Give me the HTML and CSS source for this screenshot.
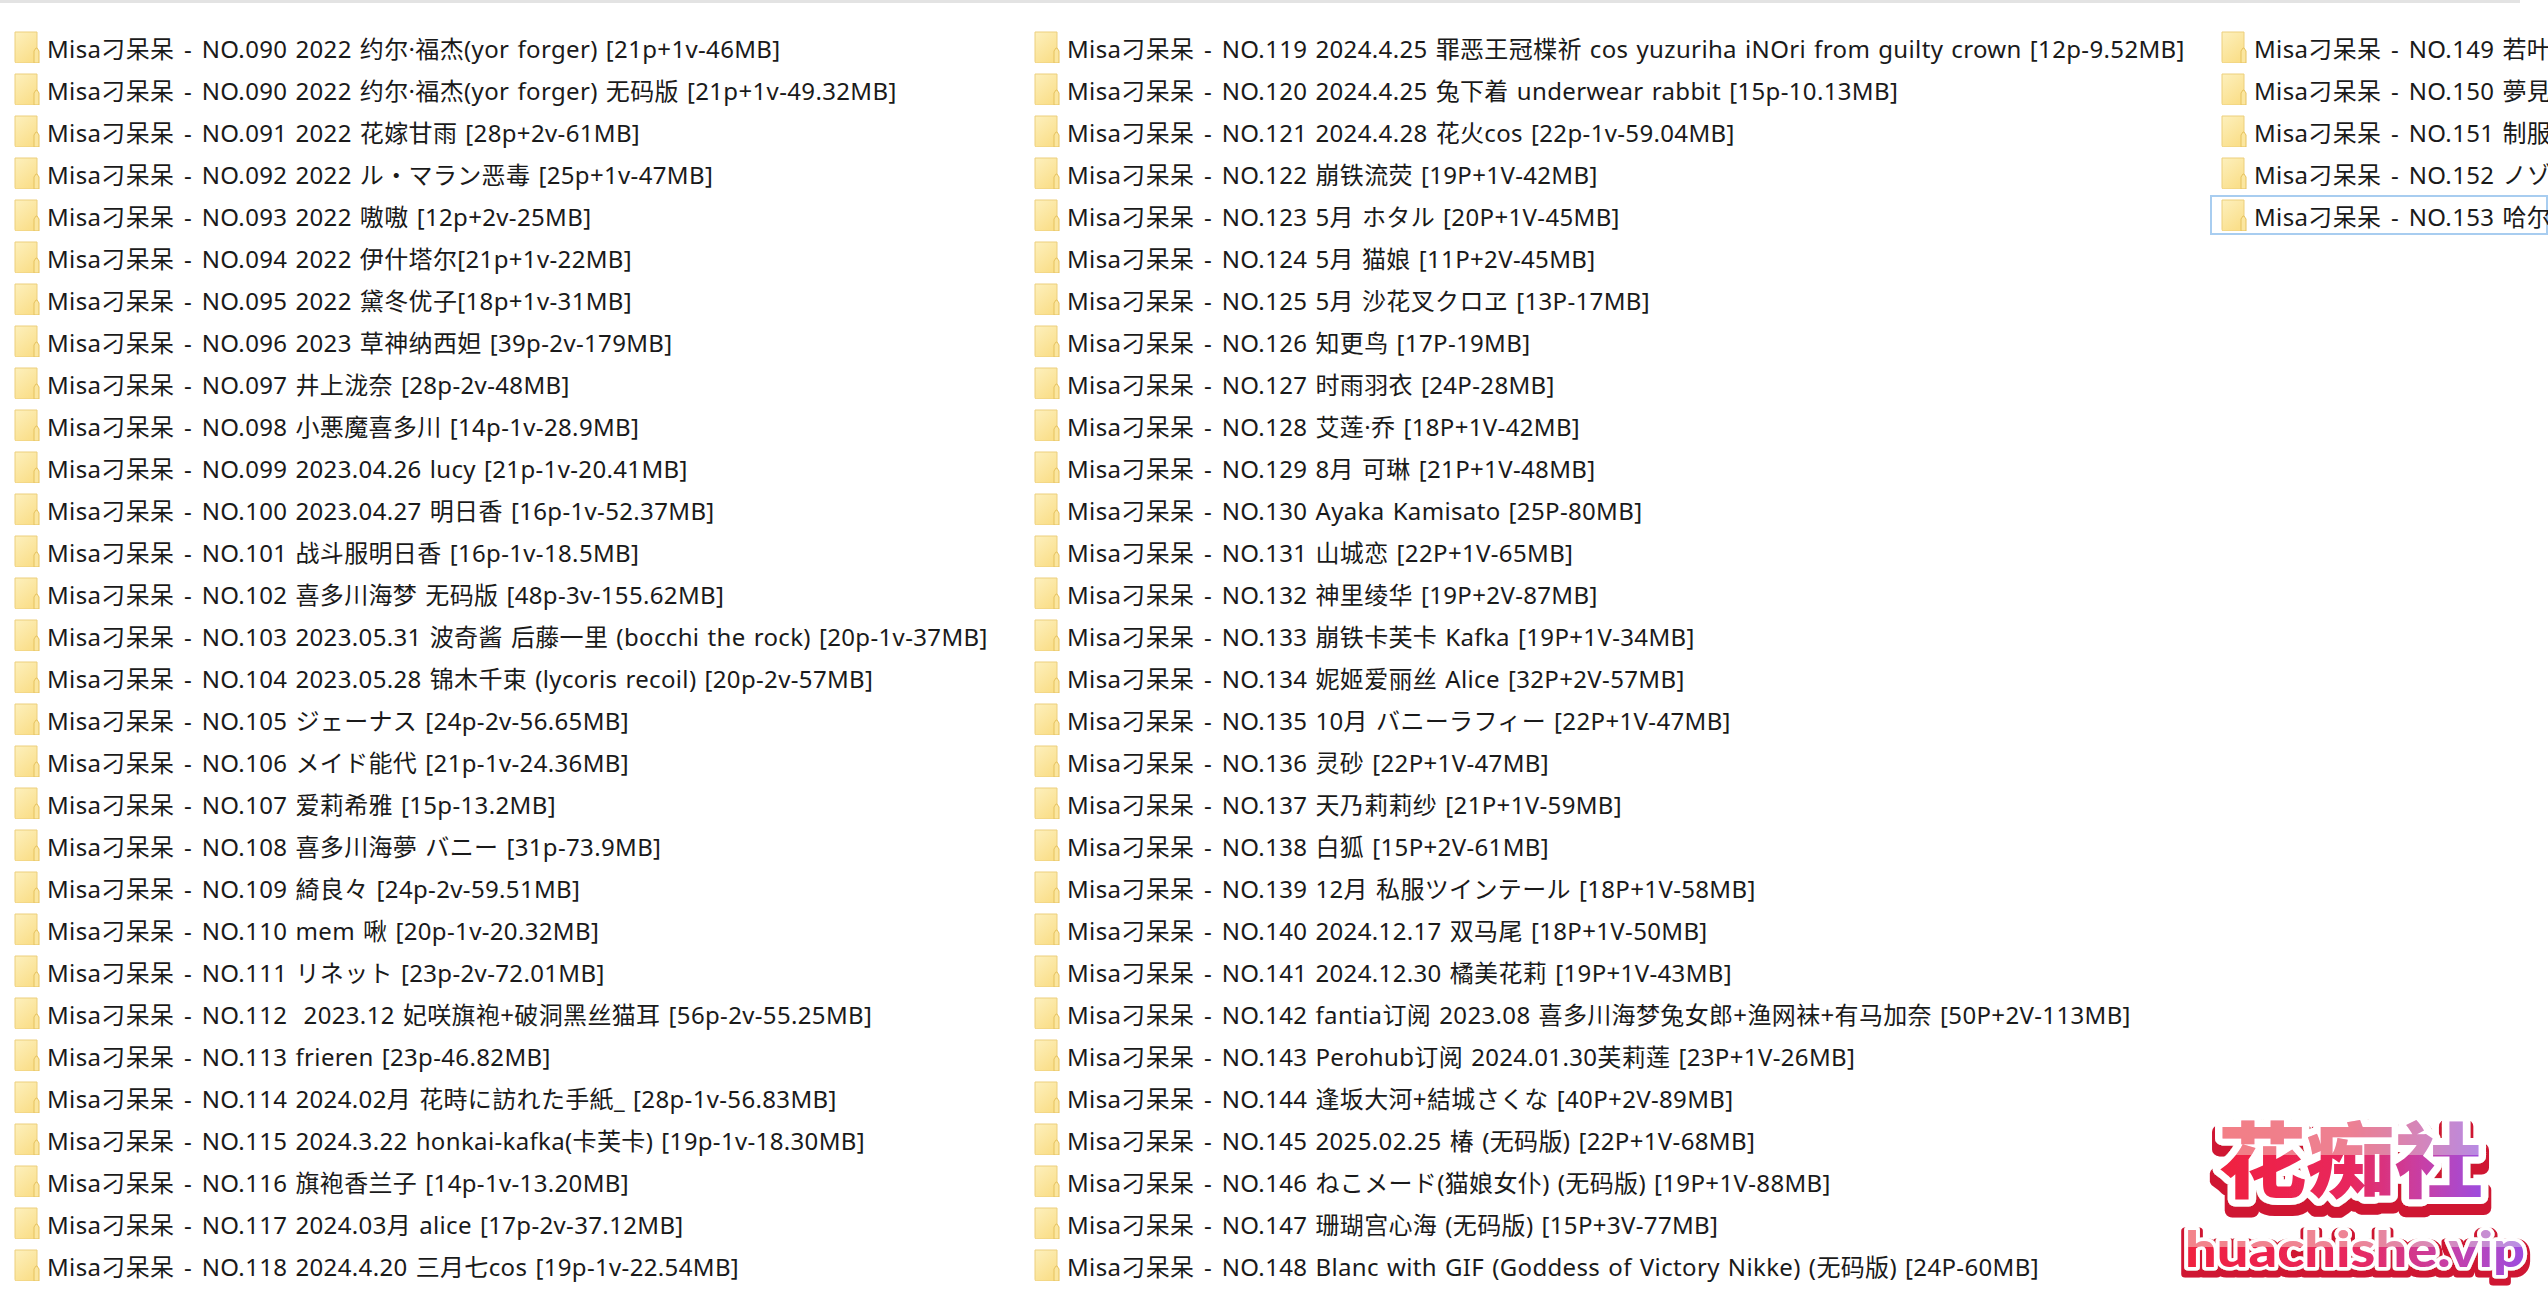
FILE: index.html

```html
<!DOCTYPE html>
<html lang="zh-CN">
<head>
  <meta charset="UTF-8" />
  <title>Misa刁呆呆</title>
  <link rel="stylesheet" href="styles.css">
</head>
<body>
  <svg class="defs" width="0" height="0">
    <defs>
      <linearGradient id="folderFill" x1="0" y1="0" x2="0.6" y2="1">
        <stop offset="0" stop-color="#fdf0bd"/>
        <stop offset="1" stop-color="#fadf8b"/>
      </linearGradient>
      <symbol id="folder" viewBox="0 0 26 32">
        <path d="M1 1h22v31H2.5Q1 32 1 30.5z" fill="url(#folderFill)" stroke="#eccf7c" stroke-width="1"/>
        <path d="M20 32V20l2-3 1 0 2 3v12z" fill="#fbe69f" stroke="#e6c25f" stroke-width="1"/>
      </symbol>
    </defs>
  </svg>

  <div class="topline"></div>

  <main class="listing">
    <ul class="col col-a">
      <li class="item"><svg class="ico"><use href="#folder"/></svg><span class="name">Misa刁呆呆 <span class="dash">-</span> NO.090 2022 约尔·福杰(yor forger) [21p+1v-46MB]</span></li>
      <li class="item"><svg class="ico"><use href="#folder"/></svg><span class="name">Misa刁呆呆 <span class="dash">-</span> NO.090 2022 约尔·福杰(yor forger) 无码版 [21p+1v-49.32MB]</span></li>
      <li class="item"><svg class="ico"><use href="#folder"/></svg><span class="name">Misa刁呆呆 <span class="dash">-</span> NO.091 2022 花嫁甘雨 [28p+2v-61MB]</span></li>
      <li class="item"><svg class="ico"><use href="#folder"/></svg><span class="name">Misa刁呆呆 <span class="dash">-</span> NO.092 2022 ル・マラン恶毒 [25p+1v-47MB]</span></li>
      <li class="item"><svg class="ico"><use href="#folder"/></svg><span class="name">Misa刁呆呆 <span class="dash">-</span> NO.093 2022 嗷嗷 [12p+2v-25MB]</span></li>
      <li class="item"><svg class="ico"><use href="#folder"/></svg><span class="name">Misa刁呆呆 <span class="dash">-</span> NO.094 2022 伊什塔尔[21p+1v-22MB]</span></li>
      <li class="item"><svg class="ico"><use href="#folder"/></svg><span class="name">Misa刁呆呆 <span class="dash">-</span> NO.095 2022 黛冬优子[18p+1v-31MB]</span></li>
      <li class="item"><svg class="ico"><use href="#folder"/></svg><span class="name">Misa刁呆呆 <span class="dash">-</span> NO.096 2023 草神纳西妲 [39p-2v-179MB]</span></li>
      <li class="item"><svg class="ico"><use href="#folder"/></svg><span class="name">Misa刁呆呆 <span class="dash">-</span> NO.097 井上泷奈 [28p-2v-48MB]</span></li>
      <li class="item"><svg class="ico"><use href="#folder"/></svg><span class="name">Misa刁呆呆 <span class="dash">-</span> NO.098 小悪魔喜多川 [14p-1v-28.9MB]</span></li>
      <li class="item"><svg class="ico"><use href="#folder"/></svg><span class="name">Misa刁呆呆 <span class="dash">-</span> NO.099 2023.04.26 lucy [21p-1v-20.41MB]</span></li>
      <li class="item"><svg class="ico"><use href="#folder"/></svg><span class="name">Misa刁呆呆 <span class="dash">-</span> NO.100 2023.04.27 明日香 [16p-1v-52.37MB]</span></li>
      <li class="item"><svg class="ico"><use href="#folder"/></svg><span class="name">Misa刁呆呆 <span class="dash">-</span> NO.101 战斗服明日香 [16p-1v-18.5MB]</span></li>
      <li class="item"><svg class="ico"><use href="#folder"/></svg><span class="name">Misa刁呆呆 <span class="dash">-</span> NO.102 喜多川海梦 无码版 [48p-3v-155.62MB]</span></li>
      <li class="item"><svg class="ico"><use href="#folder"/></svg><span class="name">Misa刁呆呆 <span class="dash">-</span> NO.103 2023.05.31 波奇酱 后藤一里 (bocchi the rock) [20p-1v-37MB]</span></li>
      <li class="item"><svg class="ico"><use href="#folder"/></svg><span class="name">Misa刁呆呆 <span class="dash">-</span> NO.104 2023.05.28 锦木千束 (lycoris recoil) [20p-2v-57MB]</span></li>
      <li class="item"><svg class="ico"><use href="#folder"/></svg><span class="name">Misa刁呆呆 <span class="dash">-</span> NO.105 ジェーナス [24p-2v-56.65MB]</span></li>
      <li class="item"><svg class="ico"><use href="#folder"/></svg><span class="name">Misa刁呆呆 <span class="dash">-</span> NO.106 メイド能代 [21p-1v-24.36MB]</span></li>
      <li class="item"><svg class="ico"><use href="#folder"/></svg><span class="name">Misa刁呆呆 <span class="dash">-</span> NO.107 爱莉希雅 [15p-13.2MB]</span></li>
      <li class="item"><svg class="ico"><use href="#folder"/></svg><span class="name">Misa刁呆呆 <span class="dash">-</span> NO.108 喜多川海夢 バニー [31p-73.9MB]</span></li>
      <li class="item"><svg class="ico"><use href="#folder"/></svg><span class="name">Misa刁呆呆 <span class="dash">-</span> NO.109 綺良々 [24p-2v-59.51MB]</span></li>
      <li class="item"><svg class="ico"><use href="#folder"/></svg><span class="name">Misa刁呆呆 <span class="dash">-</span> NO.110 mem 啾 [20p-1v-20.32MB]</span></li>
      <li class="item"><svg class="ico"><use href="#folder"/></svg><span class="name">Misa刁呆呆 <span class="dash">-</span> NO.111 リネット [23p-2v-72.01MB]</span></li>
      <li class="item"><svg class="ico"><use href="#folder"/></svg><span class="name">Misa刁呆呆 <span class="dash">-</span> NO.112 &nbsp;2023.12 妃咲旗袍+破洞黑丝猫耳 [56p-2v-55.25MB]</span></li>
      <li class="item"><svg class="ico"><use href="#folder"/></svg><span class="name">Misa刁呆呆 <span class="dash">-</span> NO.113 frieren [23p-46.82MB]</span></li>
      <li class="item"><svg class="ico"><use href="#folder"/></svg><span class="name">Misa刁呆呆 <span class="dash">-</span> NO.114 2024.02月 花時に訪れた手紙_ [28p-1v-56.83MB]</span></li>
      <li class="item"><svg class="ico"><use href="#folder"/></svg><span class="name">Misa刁呆呆 <span class="dash">-</span> NO.115 2024.3.22 honkai-kafka(卡芙卡) [19p-1v-18.30MB]</span></li>
      <li class="item"><svg class="ico"><use href="#folder"/></svg><span class="name">Misa刁呆呆 <span class="dash">-</span> NO.116 旗袍香兰子 [14p-1v-13.20MB]</span></li>
      <li class="item"><svg class="ico"><use href="#folder"/></svg><span class="name">Misa刁呆呆 <span class="dash">-</span> NO.117 2024.03月 alice [17p-2v-37.12MB]</span></li>
      <li class="item"><svg class="ico"><use href="#folder"/></svg><span class="name">Misa刁呆呆 <span class="dash">-</span> NO.118 2024.4.20 三月七cos [19p-1v-22.54MB]</span></li>
    </ul>

    <ul class="col col-b">
      <li class="item"><svg class="ico"><use href="#folder"/></svg><span class="name">Misa刁呆呆 <span class="dash">-</span> NO.119 2024.4.25 罪恶王冠楪祈 cos yuzuriha iNOri from guilty crown [12p-9.52MB]</span></li>
      <li class="item"><svg class="ico"><use href="#folder"/></svg><span class="name">Misa刁呆呆 <span class="dash">-</span> NO.120 2024.4.25 兔下着 underwear rabbit [15p-10.13MB]</span></li>
      <li class="item"><svg class="ico"><use href="#folder"/></svg><span class="name">Misa刁呆呆 <span class="dash">-</span> NO.121 2024.4.28 花火cos [22p-1v-59.04MB]</span></li>
      <li class="item"><svg class="ico"><use href="#folder"/></svg><span class="name">Misa刁呆呆 <span class="dash">-</span> NO.122 崩铁流荧 [19P+1V-42MB]</span></li>
      <li class="item"><svg class="ico"><use href="#folder"/></svg><span class="name">Misa刁呆呆 <span class="dash">-</span> NO.123 5月 ホタル [20P+1V-45MB]</span></li>
      <li class="item"><svg class="ico"><use href="#folder"/></svg><span class="name">Misa刁呆呆 <span class="dash">-</span> NO.124 5月 猫娘 [11P+2V-45MB]</span></li>
      <li class="item"><svg class="ico"><use href="#folder"/></svg><span class="name">Misa刁呆呆 <span class="dash">-</span> NO.125 5月 沙花叉クロヱ [13P-17MB]</span></li>
      <li class="item"><svg class="ico"><use href="#folder"/></svg><span class="name">Misa刁呆呆 <span class="dash">-</span> NO.126 知更鸟 [17P-19MB]</span></li>
      <li class="item"><svg class="ico"><use href="#folder"/></svg><span class="name">Misa刁呆呆 <span class="dash">-</span> NO.127 时雨羽衣 [24P-28MB]</span></li>
      <li class="item"><svg class="ico"><use href="#folder"/></svg><span class="name">Misa刁呆呆 <span class="dash">-</span> NO.128 艾莲·乔 [18P+1V-42MB]</span></li>
      <li class="item"><svg class="ico"><use href="#folder"/></svg><span class="name">Misa刁呆呆 <span class="dash">-</span> NO.129 8月 可琳 [21P+1V-48MB]</span></li>
      <li class="item"><svg class="ico"><use href="#folder"/></svg><span class="name">Misa刁呆呆 <span class="dash">-</span> NO.130 Ayaka Kamisato [25P-80MB]</span></li>
      <li class="item"><svg class="ico"><use href="#folder"/></svg><span class="name">Misa刁呆呆 <span class="dash">-</span> NO.131 山城恋 [22P+1V-65MB]</span></li>
      <li class="item"><svg class="ico"><use href="#folder"/></svg><span class="name">Misa刁呆呆 <span class="dash">-</span> NO.132 神里绫华 [19P+2V-87MB]</span></li>
      <li class="item"><svg class="ico"><use href="#folder"/></svg><span class="name">Misa刁呆呆 <span class="dash">-</span> NO.133 崩铁卡芙卡 Kafka [19P+1V-34MB]</span></li>
      <li class="item"><svg class="ico"><use href="#folder"/></svg><span class="name">Misa刁呆呆 <span class="dash">-</span> NO.134 妮姬爱丽丝 Alice [32P+2V-57MB]</span></li>
      <li class="item"><svg class="ico"><use href="#folder"/></svg><span class="name">Misa刁呆呆 <span class="dash">-</span> NO.135 10月 バニーラフィー [22P+1V-47MB]</span></li>
      <li class="item"><svg class="ico"><use href="#folder"/></svg><span class="name">Misa刁呆呆 <span class="dash">-</span> NO.136 灵砂 [22P+1V-47MB]</span></li>
      <li class="item"><svg class="ico"><use href="#folder"/></svg><span class="name">Misa刁呆呆 <span class="dash">-</span> NO.137 天乃莉莉纱 [21P+1V-59MB]</span></li>
      <li class="item"><svg class="ico"><use href="#folder"/></svg><span class="name">Misa刁呆呆 <span class="dash">-</span> NO.138 白狐 [15P+2V-61MB]</span></li>
      <li class="item"><svg class="ico"><use href="#folder"/></svg><span class="name">Misa刁呆呆 <span class="dash">-</span> NO.139 12月 私服ツインテール [18P+1V-58MB]</span></li>
      <li class="item"><svg class="ico"><use href="#folder"/></svg><span class="name">Misa刁呆呆 <span class="dash">-</span> NO.140 2024.12.17 双马尾 [18P+1V-50MB]</span></li>
      <li class="item"><svg class="ico"><use href="#folder"/></svg><span class="name">Misa刁呆呆 <span class="dash">-</span> NO.141 2024.12.30 橘美花莉 [19P+1V-43MB]</span></li>
      <li class="item"><svg class="ico"><use href="#folder"/></svg><span class="name">Misa刁呆呆 <span class="dash">-</span> NO.142 fantia订阅 2023.08 喜多川海梦兔女郎+渔网袜+有马加奈 [50P+2V-113MB]</span></li>
      <li class="item"><svg class="ico"><use href="#folder"/></svg><span class="name">Misa刁呆呆 <span class="dash">-</span> NO.143 Perohub订阅 2024.01.30芙莉莲 [23P+1V-26MB]</span></li>
      <li class="item"><svg class="ico"><use href="#folder"/></svg><span class="name">Misa刁呆呆 <span class="dash">-</span> NO.144 逢坂大河+結城さくな [40P+2V-89MB]</span></li>
      <li class="item"><svg class="ico"><use href="#folder"/></svg><span class="name">Misa刁呆呆 <span class="dash">-</span> NO.145 2025.02.25 椿 (无码版) [22P+1V-68MB]</span></li>
      <li class="item"><svg class="ico"><use href="#folder"/></svg><span class="name">Misa刁呆呆 <span class="dash">-</span> NO.146 ねこメード(猫娘女仆) (无码版) [19P+1V-88MB]</span></li>
      <li class="item"><svg class="ico"><use href="#folder"/></svg><span class="name">Misa刁呆呆 <span class="dash">-</span> NO.147 珊瑚宫心海 (无码版) [15P+3V-77MB]</span></li>
      <li class="item"><svg class="ico"><use href="#folder"/></svg><span class="name">Misa刁呆呆 <span class="dash">-</span> NO.148 Blanc with GIF (Goddess of Victory Nikke) (无码版) [24P-60MB]</span></li>
    </ul>

    <ul class="col col-c">
      <li class="item"><svg class="ico"><use href="#folder"/></svg><span class="name">Misa刁呆呆 <span class="dash">-</span> NO.149 若叶</span></li>
      <li class="item"><svg class="ico"><use href="#folder"/></svg><span class="name">Misa刁呆呆 <span class="dash">-</span> NO.150 夢見</span></li>
      <li class="item"><svg class="ico"><use href="#folder"/></svg><span class="name">Misa刁呆呆 <span class="dash">-</span> NO.151 制服</span></li>
      <li class="item"><svg class="ico"><use href="#folder"/></svg><span class="name">Misa刁呆呆 <span class="dash">-</span> NO.152 ノゾ</span></li>
      <li class="item selected"><svg class="ico"><use href="#folder"/></svg><span class="name">Misa刁呆呆 <span class="dash">-</span> NO.153 哈尔</span></li>
    </ul>
  </main>

  <svg class="logo" width="370" height="190" viewBox="0 0 370 190">
    <defs>
      <linearGradient id="logoGrad" x1="0" y1="0" x2="1" y2="0">
        <stop offset="0" stop-color="#f0203f"/>
        <stop offset="0.5" stop-color="#e8285e"/>
        <stop offset="0.78" stop-color="#c640a8"/>
        <stop offset="1" stop-color="#9c4de0"/>
      </linearGradient>
      <filter id="edgeZh" filterUnits="userSpaceOnUse" x="0" y="0" width="370" height="190">
        <feMorphology in="SourceAlpha" operator="dilate" radius="3" result="fat"/>
        <feOffset in="fat" dy="8" result="low"/>
        <feFlood flood-color="#cf1433"/>
        <feComposite in2="low" operator="in" result="red"/>
        <feFlood flood-color="#fff" flood-opacity="0.2" x="0" y="0" width="370" height="50"/>
        <feComposite in2="SourceAlpha" operator="in" result="gloss"/>
        <feMerge>
          <feMergeNode in="red"/>
          <feMergeNode in="SourceGraphic"/>
          <feMergeNode in="gloss"/>
        </feMerge>
      </filter>
      <filter id="edgeEn" filterUnits="userSpaceOnUse" x="0" y="0" width="370" height="190">
        <feMorphology in="SourceAlpha" operator="dilate" radius="3" result="fat"/>
        <feOffset in="fat" dy="4" result="low"/>
        <feFlood flood-color="#cf1433"/>
        <feComposite in2="low" operator="in" result="red"/>
        <feFlood flood-color="#fff" flood-opacity="0.22" x="0" y="115" width="370" height="27"/>
        <feComposite in2="SourceAlpha" operator="in" result="gloss"/>
        <feMerge>
          <feMergeNode in="red"/>
          <feMergeNode in="SourceGraphic"/>
          <feMergeNode in="gloss"/>
        </feMerge>
      </filter>
    </defs>
    <text class="logo-zh" x="48" y="86" textLength="265" lengthAdjust="spacingAndGlyphs">花痴社</text>
    <text class="logo-en" x="15" y="162" textLength="340" lengthAdjust="spacingAndGlyphs">huachishe.vip</text>
  </svg>
</body>
</html>
```

FILE: styles.css

```css
html, body {
  margin: 0;
  height: 100%;
}

body {
  background: #fff;
  color: #1a1a1a;
  font-family: "Noto Sans", "Noto Sans CJK SC", "Noto Sans CJK JP", sans-serif;
  font-size: 24px;
  letter-spacing: 0.35px;
  word-spacing: 1.5px;
  overflow: hidden;
  position: relative;
}

.defs {
  display: block;
  height: 0;
}

.topline {
  height: 3px;
  width: 2520px;
  background: #e3e3e3;
}

.listing {
  display: flex;
  padding: 24px 0 0 3px;
}

.col {
  list-style: none;
  margin: 0;
  padding: 0;
  display: flex;
  flex-direction: column;
  gap: 2px;
  flex: none;
}

.col-a { width: 1020px; }
.col-b { width: 1187px; }
.col-c { width: 338px; }

.item {
  display: flex;
  align-items: center;
  gap: 7px;
  height: 40px;
  padding-left: 11px;
  white-space: nowrap;
  box-sizing: border-box;
}

.selected {
  border: 2px solid #a8cdf0;
  padding-left: 9px;
}

.ico {
  width: 26px;
  height: 32px;
  flex: none;
}

.dash {
  margin: 0 1.5px;
}

.logo {
  position: absolute;
  left: 2170px;
  top: 1105px;
}

.logo text {
  fill: url(#logoGrad);
  stroke: #fff;
  stroke-linejoin: round;
  paint-order: stroke;
  letter-spacing: 0;
  word-spacing: 0;
}

.logo-zh {
  font-family: "Noto Sans CJK SC", sans-serif;
  font-size: 82px;
  font-weight: 900;
  stroke-width: 14px;
  filter: url(#edgeZh);
}

.logo-en {
  font-family: "Lato", "Noto Sans", sans-serif;
  font-size: 50px;
  font-weight: 900;
  stroke-width: 7px;
  filter: url(#edgeEn);
}
```
